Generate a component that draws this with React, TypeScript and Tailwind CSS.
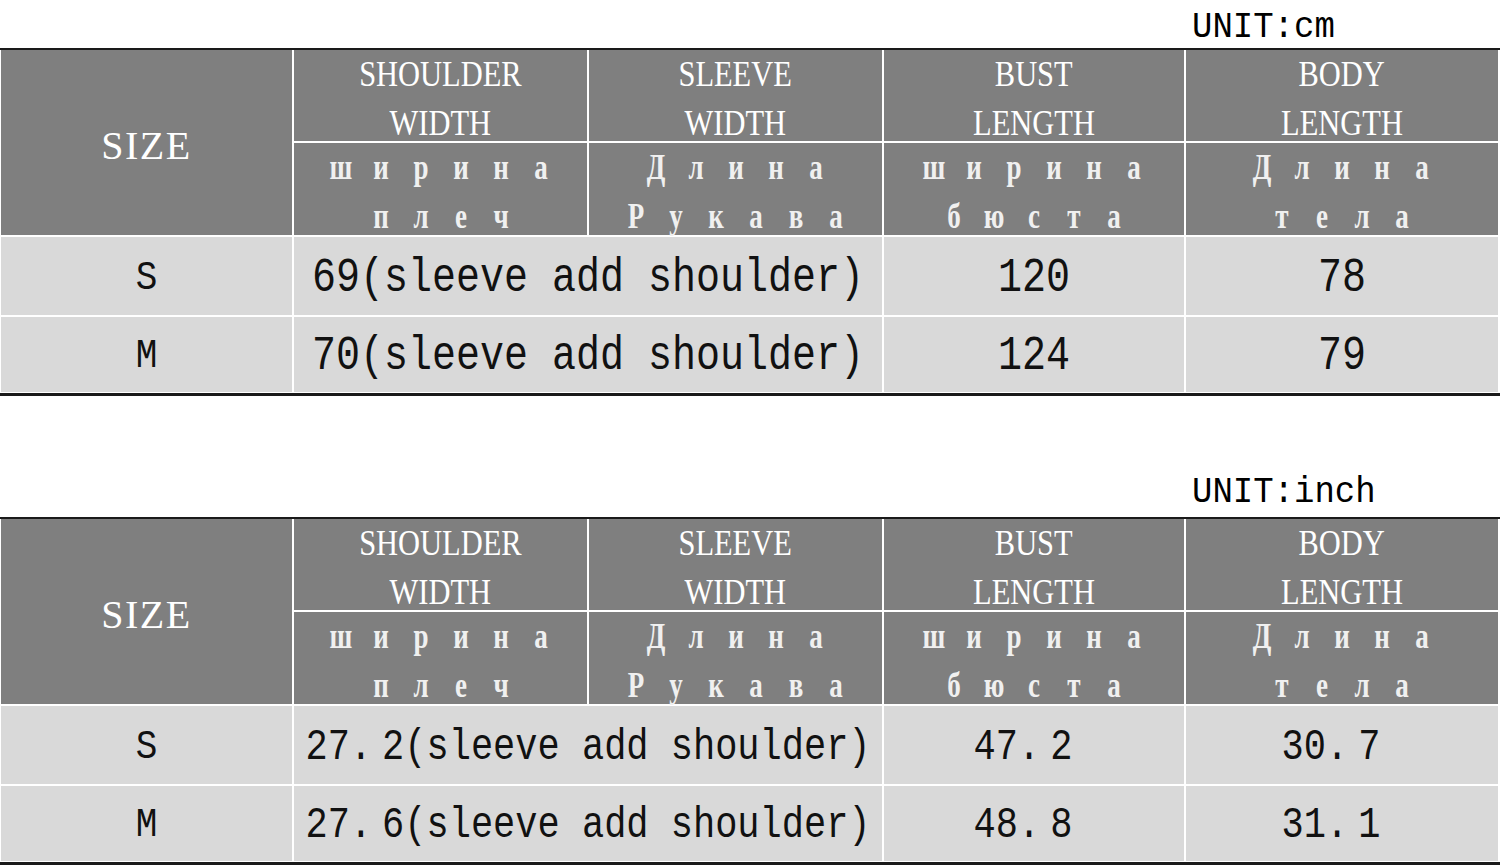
import React from 'react';

type Row = { size: string; first: string; bust: string; body: string };

const serif = "font-['Liberation_Serif',_'Times_New_Roman',_serif]";
const mono = "font-['Liberation_Mono',_'Courier_New',_monospace]";

const headers = [
  { en: ['SHOULDER', 'WIDTH'], ru: ['ширина', 'плеч'] },
  { en: ['SLEEVE', 'WIDTH'], ru: ['Длина', 'Рукава'] },
  { en: ['BUST', 'LENGTH'], ru: ['ширина', 'бюста'] },
  { en: ['BODY', 'LENGTH'], ru: ['Длина', 'тела'] },
];

// spaced cyrillic line, each letter on a fixed pitch
function Spaced({ text }: { text: string }) {
  return (
    <div className="flex justify-center h-[38px] items-center">
      {text.split('').map((ch, i) => (
        <span key={i} className="w-[40px] text-center inline-block scale-x-[0.75]">
          {ch}
        </span>
      ))}
    </div>
  );
}

// decimal numbers show a wide gap after the point in the source sheet
function Num({ value }: { value: string }) {
  const [a, b] = value.split('.');
  if (b === undefined) return <>{value}</>;
  return (
    <>
      {a}.<span className="ml-[10px]">{b}</span>
    </>
  );
}

function SizeTable({ unit, rows, small, unitPos }: { unit: string; rows: Row[]; small?: boolean; unitPos: string }) {
  const dataText = small ? 'text-[37px]' : 'text-[40px]';
  return (
    <div className="w-full">
      <div className="h-[48px] relative">
        <span className={`absolute left-[1192px] ${unitPos} inline-block scale-y-[1.1] origin-bottom text-[34px] leading-none text-black ${mono}`}>
          {unit}
        </span>
      </div>
      <div className="border-t-2 border-b-[3px] border-[#1a1a1a] bg-white pb-[1px] pl-[1px] pr-[2px]">
        <div className="grid grid-cols-[291px_293px_293px_300px_1fr] grid-rows-[91px_92px_78px_75px] gap-[2px]">
          <div className={`row-span-2 bg-[#7f7f7f] flex items-center justify-center pt-[7px] text-white text-[40px] tracking-[1.5px] ${serif}`}>
            SIZE
          </div>
          {headers.map((h) => (
            <div key={h.en[0]} className={`bg-[#7f7f7f] flex flex-col items-center justify-start gap-[15px] text-white text-[35px] leading-[34px] pt-[8px] ${serif}`}>
              {h.en.map((l) => (
                <span key={l} className="inline-block scale-x-[0.87] whitespace-nowrap">
                  {l}
                </span>
              ))}
            </div>
          ))}
          {headers.map((h, i) => (
            <div key={i} className={`bg-[#7f7f7f] flex flex-col justify-start gap-[11px] pt-[5px] text-[#f0f0f0] text-[36px] leading-[38px] font-bold ${serif}`}>
              {h.ru.map((l) => (
                <Spaced key={l} text={l} />
              ))}
            </div>
          ))}
          {rows.map((r) => {
            const [num, rest] = r.first.split('(');
            const dec = r.bust.includes('.');
            return (
              <React.Fragment key={r.size}>
                <div className={`bg-[#d9d9d9] flex items-center justify-center pt-[5px] text-[#111] text-[36px] ${mono}`}>
                  <span className="inline-block scale-y-[1.15]">{r.size}</span>
                </div>
                <div className={`col-span-2 bg-[#d9d9d9] flex items-center justify-center pt-[5px] text-[#111] ${dataText} ${mono}`}>
                  <span className="inline-block scale-y-[1.2] whitespace-nowrap">
                    <Num value={num} />({rest}
                  </span>
                </div>
                <div className={`bg-[#d9d9d9] flex items-center justify-center pt-[5px] text-[#111] ${dataText} ${mono} ${dec ? 'pr-[22px]' : ''}`}>
                  <span className="inline-block scale-y-[1.2] whitespace-nowrap">
                    <Num value={r.bust} />
                  </span>
                </div>
                <div className={`bg-[#d9d9d9] flex items-center justify-center pt-[5px] text-[#111] ${dataText} ${mono} ${dec ? 'pr-[22px]' : ''}`}>
                  <span className="inline-block scale-y-[1.2] whitespace-nowrap">
                    <Num value={r.body} />
                  </span>
                </div>
              </React.Fragment>
            );
          })}
        </div>
      </div>
    </div>
  );
}

export default function App() {
  return (
    <div className="w-[1500px] h-[868px] bg-white overflow-hidden">
      <SizeTable
        unit="UNIT:cm"
        unitPos="bottom-[2px]"
        rows={[
          { size: 'S', first: '69(sleeve add shoulder)', bust: '120', body: '78' },
          { size: 'M', first: '70(sleeve add shoulder)', bust: '124', body: '79' },
        ]}
      />
      <div className="h-[73px]" />
      <SizeTable
        unit="UNIT:inch"
        unitPos="bottom-[6px]"
        small
        rows={[
          { size: 'S', first: '27.2(sleeve add shoulder)', bust: '47.2', body: '30.7' },
          { size: 'M', first: '27.6(sleeve add shoulder)', bust: '48.8', body: '31.1' },
        ]}
      />
    </div>
  );
}
